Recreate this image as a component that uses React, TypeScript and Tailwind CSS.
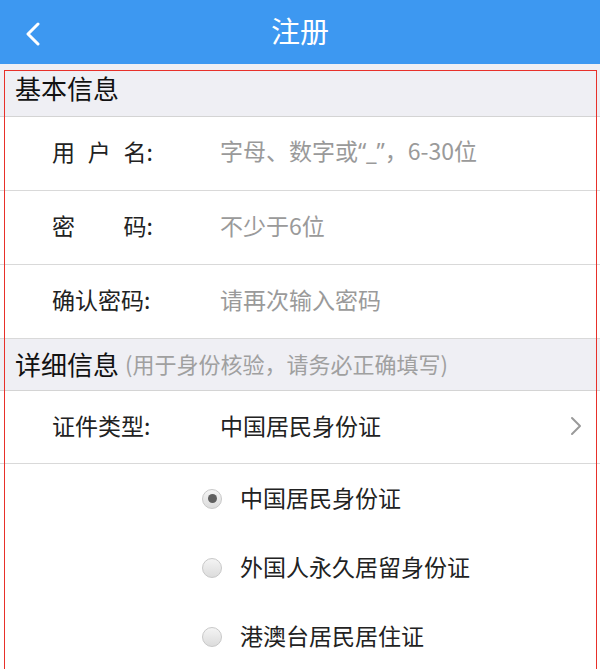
import React from "react";

const font = { fontFamily: '"Noto Sans CJK SC", "Noto Sans", sans-serif' };
const latin = { fontFamily: '"Noto Sans", "Liberation Sans", sans-serif' };

function Row({ label, children }: { label: React.ReactNode; children: React.ReactNode }) {
  return (
    <div className="flex h-[74px] items-center border-b border-[#d9d9d9] bg-white pb-[5px]">
      <div className="ml-[52px] flex w-[101px] justify-between text-[23px] text-[#222]">{label}</div>
      <div className="ml-[67px] flex-1 text-[23px]">{children}</div>
    </div>
  );
}

function Radio({ checked, label }: { checked?: boolean; label: string }) {
  return (
    <div className="flex h-[69px] items-center pl-[202px]">
      <span className="flex h-[20px] w-[20px] items-center justify-center rounded-full border border-[#c8c8c8] bg-gradient-to-b from-[#f4f4f4] to-[#dcdcdc]">
        {checked && <span className="h-[9px] w-[9px] rounded-full bg-[#5f5f5f]" />}
      </span>
      <span className="ml-[18px] pb-[3px] text-[23px] text-[#222]">{label}</span>
    </div>
  );
}

export default function App() {
  return (
    <div className="relative h-[669px] w-[600px] overflow-hidden bg-white" style={font}>
      <div className="relative flex h-[64px] items-center justify-center bg-[#3d98f1]">
        <svg className="absolute left-[24px] top-[22px]" width="18" height="24" viewBox="0 0 18 24">
          <path d="M14 2 L4 12 L14 22" stroke="white" strokeWidth="3" fill="none" strokeLinecap="round" strokeLinejoin="round" />
        </svg>
        <span className="pb-[2px] text-[29px] text-white">注册</span>
      </div>
      <div className="flex h-[53px] items-center border-b border-[#d4d4d4] bg-[#efeff4] pb-[6px] pl-[15px]">
        <span className="text-[26px] text-[#111]">基本信息</span>
      </div>
      <Row label={<><span>用</span><span>户</span><span>名:</span></>}>
        <span className="text-[#9a9a9a]">
          字母、数字或<span style={latin}>“_”</span>，6-30位
        </span>
      </Row>
      <Row label={<><span>密</span><span>码:</span></>}>
        <span className="text-[#9a9a9a]">不少于6位</span>
      </Row>
      <Row label={<span>确认密码:</span>}>
        <span className="text-[#9a9a9a]">请再次输入密码</span>
      </Row>
      <div className="flex h-[52px] items-center border-b border-[#d4d4d4] bg-[#efeff4] pb-[2px] pl-[15px]">
        <span className="text-[26px] text-[#111]">详细信息</span>
        <span className="ml-[6px] text-[22px] text-[#a0a0a0]">(用于身份核验，请务必正确填写)</span>
      </div>
      <div className="flex h-[73px] items-center border-b border-[#d9d9d9] bg-white pb-[3px]">
        <div className="ml-[52px] w-[101px] whitespace-nowrap text-[23px] text-[#222]">证件类型:</div>
        <div className="ml-[67px] flex-1 text-[23px] text-[#222]">中国居民身份证</div>
        <svg className="mr-[18px]" width="12" height="20" viewBox="0 0 12 20">
          <path d="M2 2 L10 10 L2 18" stroke="#9a9a9a" strokeWidth="2" fill="none" strokeLinecap="round" strokeLinejoin="round" />
        </svg>
      </div>
      <div>
        <Radio checked label="中国居民身份证" />
        <Radio label="外国人永久居留身份证" />
        <Radio label="港澳台居民居住证" />
      </div>
      <div className="pointer-events-none absolute left-[4px] top-[70px] h-[620px] w-[593px] border border-[#e8302a]" />
    </div>
  );
}
